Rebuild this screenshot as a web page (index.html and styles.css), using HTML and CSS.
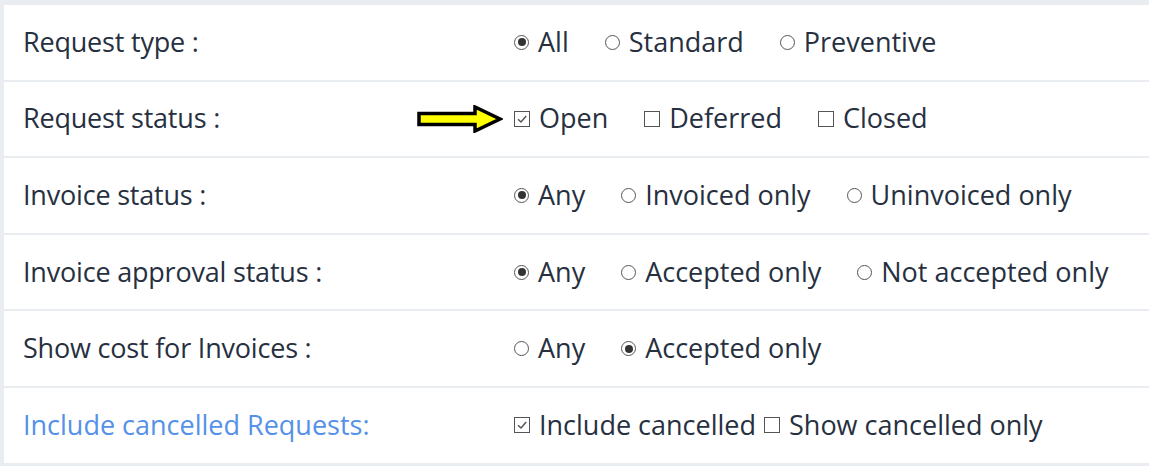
FILE: index.html
```html
<!DOCTYPE html>
<html>
<head>
<meta charset="utf-8">
<link rel="stylesheet" href="styles.css">
</head>
<body>
<div class="panel">
  <div class="row">
    <div class="label">Request type :</div>
    <div class="options">
      <span class="opt"><span class="radio on"></span>All</span>
      <span class="opt"><span class="radio"></span>Standard</span>
      <span class="opt"><span class="radio"></span>Preventive</span>
    </div>
  </div>
  <div class="row">
    <div class="label">Request status :</div>
    <div class="options">
      <svg class="arrow" width="86" height="28" viewBox="0 0 86 28">
        <path d="M2 8.5 H58 V2 L83 14 L58 26 V19.5 H2 Z" fill="#ffff00" stroke="#000" stroke-width="3.5" stroke-linejoin="miter"/>
      </svg>
      <span class="opt"><span class="check on"><svg width="14" height="14" viewBox="0 0 14 14"><path d="M3 7.2 L6 10 L11.2 4" fill="none" stroke="#555" stroke-width="1.5"/></svg></span>Open</span>
      <span class="opt"><span class="check"></span>Deferred</span>
      <span class="opt"><span class="check"></span>Closed</span>
    </div>
  </div>
  <div class="row">
    <div class="label">Invoice status :</div>
    <div class="options">
      <span class="opt"><span class="radio on"></span>Any</span>
      <span class="opt"><span class="radio"></span>Invoiced only</span>
      <span class="opt"><span class="radio"></span>Uninvoiced only</span>
    </div>
  </div>
  <div class="row">
    <div class="label">Invoice approval status :</div>
    <div class="options">
      <span class="opt"><span class="radio on"></span>Any</span>
      <span class="opt"><span class="radio"></span>Accepted only</span>
      <span class="opt"><span class="radio"></span>Not accepted only</span>
    </div>
  </div>
  <div class="row">
    <div class="label">Show cost for Invoices :</div>
    <div class="options">
      <span class="opt"><span class="radio"></span>Any</span>
      <span class="opt"><span class="radio on"></span>Accepted only</span>
    </div>
  </div>
  <div class="row">
    <div class="label link">Include cancelled Requests:</div>
    <div class="options tight">
      <span class="opt"><span class="check on"><svg width="14" height="14" viewBox="0 0 14 14"><path d="M3 7.2 L6 10 L11.2 4" fill="none" stroke="#555" stroke-width="1.5"/></svg></span>Include cancelled</span>
      <span class="opt"><span class="check"></span>Show cancelled only</span>
    </div>
  </div>
</div>
</body>
</html>
```
FILE: styles.css
```css
html, body {
  margin: 0;
  padding: 0;
  background: #e9ecf0;
}
body {
  font-family: "Open Sans", "Lato", sans-serif;
  color: #27303f;
  width: 1149px;
  height: 466px;
  overflow: hidden;
}
.panel {
  margin: 5px 0 0 4px;
  display: flex;
  flex-direction: column;
  gap: 2px;
}
.row {
  height: 74.6px;
  background: #fff;
  display: flex;
  align-items: center;
  font-size: 27px;
  line-height: 1;
  padding-bottom: 2px;
  box-sizing: border-box;
}
.label {
  width: 491px;
  padding-left: 19px;
  flex: none;
  letter-spacing: -0.2px;
}
.label.link {
  color: #5591e8;
  letter-spacing: 0;
}
.options {
  display: flex;
  align-items: center;
  gap: 36px;
  position: relative;
}
.options.tight {
  gap: 8px;
}
.opt {
  display: inline-flex;
  align-items: center;
  gap: 9px;
}
.radio {
  width: 15px;
  height: 15px;
  border: 1.5px solid #555;
  border-radius: 50%;
  box-sizing: border-box;
  display: inline-flex;
  align-items: center;
  justify-content: center;
  margin-top: 2px;
}
.radio.on::after {
  content: "";
  width: 8px;
  height: 8px;
  border-radius: 50%;
  background: #333;
}
.check {
  width: 16px;
  height: 16px;
  border: 1.5px solid #555;
  box-sizing: border-box;
  display: inline-flex;
  align-items: center;
  justify-content: center;
  margin-top: 2px;
}
.check svg {
  display: block;
}
.arrow {
  position: absolute;
  left: -97px;
  top: 50%;
  margin-top: -13px;
}
```
